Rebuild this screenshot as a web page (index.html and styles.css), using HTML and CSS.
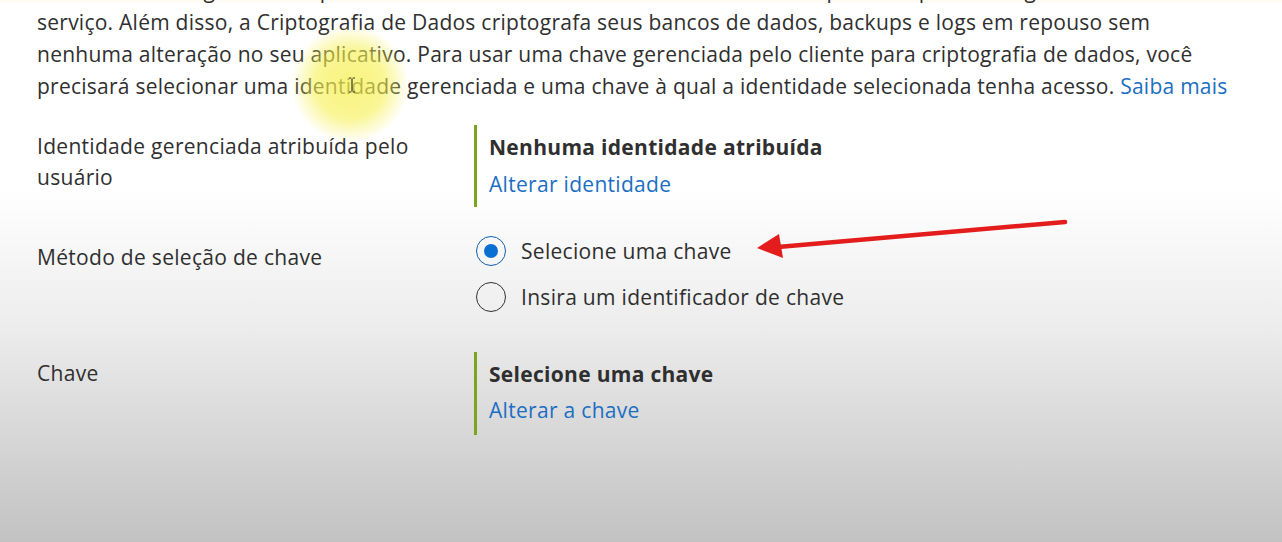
FILE: index.html
```html
<!DOCTYPE html>
<html lang="pt-BR">
<head>
<meta charset="utf-8">
<title>Criptografia de Dados</title>
<link rel="stylesheet" href="styles.css">
</head>
<body>
<main class="page">
  <p class="intro">Usar uma chave gerenciada pelo cliente oferece mais controle sobre a chave e permite que você a gerencie no cofre do<br>serviço. Além disso, a Criptografia de Dados criptografa seus bancos de dados, backups e logs em repouso sem<br>nenhuma alteração no seu aplicativo. Para usar uma chave gerenciada pelo cliente para criptografia de dados, você<br>precisará selecionar uma identidade gerenciada e uma chave à qual a identidade selecionada tenha acesso. <a class="link" href="#">Saiba mais</a></p>

  <section class="form">
    <div class="row row-identity">
      <div class="label">Identidade gerenciada atribuída pelo<br>usuário</div>
      <div class="value">
        <div class="value-title">Nenhuma identidade atribuída</div>
        <a class="link value-link" href="#">Alterar identidade</a>
      </div>
    </div>

    <div class="row row-method">
      <div class="label">Método de seleção de chave</div>
      <div class="radios">
        <label class="radio checked"><span class="circle"></span><span>Selecione uma chave</span></label>
        <label class="radio"><span class="circle"></span><span>Insira um identificador de chave</span></label>
      </div>
    </div>

    <div class="row row-key">
      <div class="label">Chave</div>
      <div class="value">
        <div class="value-title">Selecione uma chave</div>
        <a class="link value-link" href="#">Alterar a chave</a>
      </div>
    </div>
  </section>

  <div class="highlight"></div>
  <svg class="cursor" width="8" height="16" viewBox="0 0 8 16" aria-hidden="true">
    <path d="M1 1h2.2M4.8 1H7M4 1.5v13M1 15h2.2M4.8 15H7" stroke="#333" stroke-width="1.2" fill="none"/>
  </svg>
  <svg class="arrow" width="330" height="60" viewBox="0 0 330 60" aria-hidden="true">
    <line x1="317" y1="10" x2="30" y2="35" stroke="#e31c1c" stroke-width="4.5" stroke-linecap="round"/>
    <polygon points="9,36 31,22 35,46" fill="#e31c1c"/>
  </svg>
</main>
</body>
</html>
```

FILE: styles.css
```css
html, body {
  margin: 0;
  padding: 0;
}

body {
  width: 1282px;
  height: 542px;
  overflow: hidden;
  background: linear-gradient(to bottom, #fdfaf0 0px, #ffffff 4px, #ffffff 190px, #ececec 330px, #d8d8d8 430px, #c2c2c2 542px);
  font-family: "Open Sans", "Noto Sans", sans-serif;
  color: #2f2f2f;
  font-size: 21px;
}

.page {
  position: relative;
  display: flow-root;
  height: 542px;
  padding-left: 37px;
}

.intro {
  margin: -26px 0 0 0;
  line-height: 32px;
  letter-spacing: 0.25px;
  white-space: nowrap;
}

.link {
  color: #1b6ec2;
  text-decoration: none;
}

.form {
  margin-top: 23px;
}

.row {
  display: flex;
}

.label {
  width: 437px;
  flex: none;
  padding-top: 6px;
  line-height: 31px;
  letter-spacing: 0.3px;
}

.value {
  border-left: 3px solid #7aa51c;
  padding: 6px 0 7px 12px;
  letter-spacing: 0.3px;
}

.value-title {
  font-weight: 700;
  line-height: 32px;
}

.value-link {
  display: block;
  margin-top: 5px;
  line-height: 32px;
}

.row-method {
  margin-top: 28px;
}

.row-method .label {
  padding-top: 7px;
}

.radios {
  display: flex;
  flex-direction: column;
  gap: 14px;
  margin-left: 2px;
}

.radio {
  display: flex;
  align-items: center;
  gap: 15px;
  line-height: 32px;
  letter-spacing: 0.3px;
}

.circle {
  width: 30px;
  height: 30px;
  box-sizing: border-box;
  border: 1.5px solid #323130;
  border-radius: 50%;
  display: flex;
  align-items: center;
  justify-content: center;
}

.radio.checked .circle {
  border-color: #0f5fae;
}

.radio.checked .circle::after {
  content: "";
  width: 14px;
  height: 14px;
  border-radius: 50%;
  background: #0a6fd1;
}

.row-key {
  margin-top: 39px;
}

.row-key .value {
  padding-bottom: 9px;
}

.row-key .value-link {
  margin-top: 4px;
}

.highlight {
  position: absolute;
  left: 292px;
  top: 26px;
  width: 116px;
  height: 116px;
  border-radius: 50%;
  background: radial-gradient(circle, rgba(246, 240, 80, 0.75) 0%, rgba(246, 240, 80, 0.6) 42%, rgba(246, 240, 80, 0) 72%);
  pointer-events: none;
}

.cursor {
  position: absolute;
  left: 348px;
  top: 77px;
}

.arrow {
  position: absolute;
  left: 748px;
  top: 212px;
}
```
